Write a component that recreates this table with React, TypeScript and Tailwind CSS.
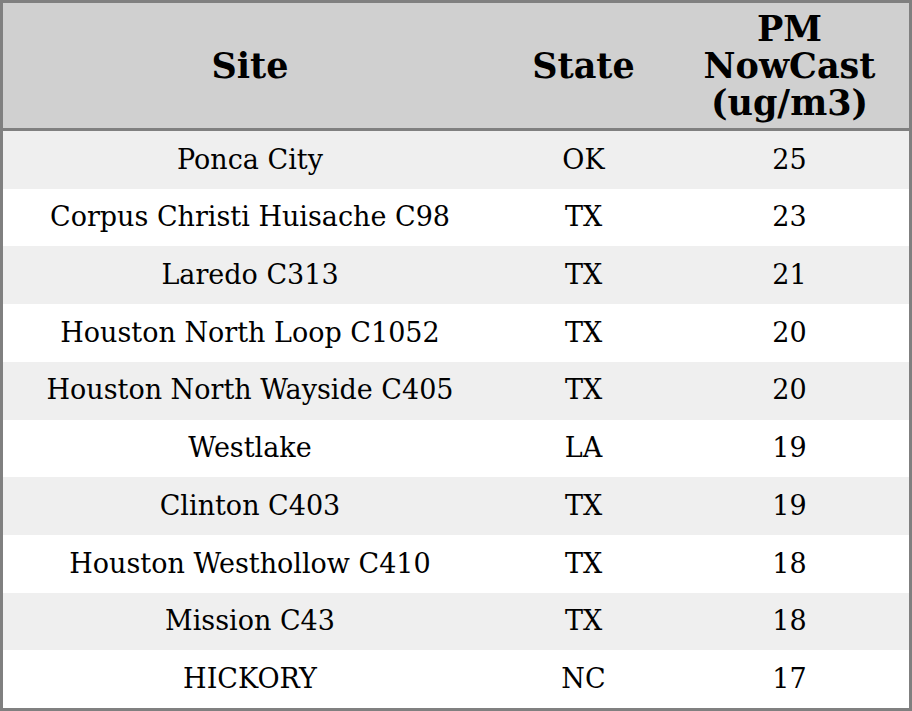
const rows: [string, string, number][] = [
  ["Ponca City", "OK", 25],
  ["Corpus Christi Huisache C98", "TX", 23],
  ["Laredo C313", "TX", 21],
  ["Houston North Loop C1052", "TX", 20],
  ["Houston North Wayside C405", "TX", 20],
  ["Westlake", "LA", 19],
  ["Clinton C403", "TX", 19],
  ["Houston Westhollow C410", "TX", 18],
  ["Mission C43", "TX", 18],
  ["HICKORY", "NC", 17],
];

export default function App() {
  return (
    <div className="w-[912px] h-[711px] bg-white font-['DejaVu_Serif',serif] text-black">
      <div className="h-full border-[3px] border-[#808080] flex flex-col">
        <div className="h-[128px] shrink-0 grid grid-cols-[494px_173px_1fr] items-center bg-[#d0d0d0] border-b-[3px] border-[#808080] text-[35px] font-bold leading-[37px] text-center">
          <div>Site</div>
          <div>State</div>
          <div>
            PM
            <br />
            NowCast
            <br />
            (ug/m3)
          </div>
        </div>
        <div className="flex-1 flex flex-col">
          {rows.map(([site, state, pm], i) => (
            <div
              key={site}
              className={`flex-1 grid grid-cols-[494px_173px_1fr] items-center text-center text-[27px] ${
                i % 2 === 0 ? "bg-[#efefef]" : "bg-white"
              }`}
            >
              <div>{site}</div>
              <div>{state}</div>
              <div>{pm}</div>
            </div>
          ))}
        </div>
      </div>
    </div>
  );
}
